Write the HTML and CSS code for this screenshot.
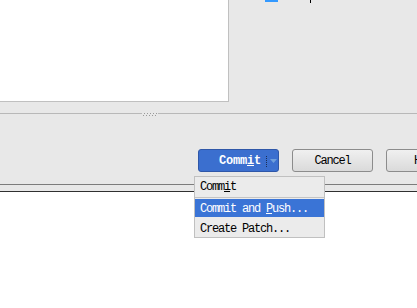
FILE: index.html
```html
<!DOCTYPE html>
<html lang="en">
<head>
    <meta charset="UTF-8">
    <title>Commit Changes</title>
    <link rel="stylesheet" href="styles.css">
</head>
<body>
    <div class="top">
        <div class="panel"></div>
        <div class="side">
            <span class="check"></span>
            <span class="mark"></span>
        </div>
    </div>

    <div class="splitter">
        <svg class="grip" width="16" height="4" viewBox="0 0 16 4">
            <g fill="#9a9a9a">
                <rect x="1" y="2" width="1" height="1"/><rect x="2" y="0" width="1" height="1"/>
                <rect x="4" y="2" width="1" height="1"/><rect x="5" y="0" width="1" height="1"/>
                <rect x="7" y="2" width="1" height="1"/><rect x="8" y="0" width="1" height="1"/>
                <rect x="10" y="2" width="1" height="1"/><rect x="11" y="0" width="1" height="1"/>
                <rect x="13" y="2" width="1" height="1"/><rect x="14" y="0" width="1" height="1"/>
            </g>
        </svg>
    </div>

    <div class="actions">
        <button class="btn btn-primary" type="button">
            <span class="btn-label">Comm<u>i</u>t</span>
            <span class="btn-split"></span>
            <svg class="btn-arrow" width="7" height="4" viewBox="0 0 7 4"><path d="M0 0H7L3.5 4Z" fill="#6f9fdc"/></svg>
        </button>
        <button class="btn" type="button">Cancel</button>
        <button class="btn btn-cut" type="button">Help</button>
    </div>

    <div class="rule"></div>
    <div class="bottom"></div>

    <!-- menu desplegable del botón Commit -->
    <div class="menu">
        <div class="menu-item">Comm<u>i</u>t</div>
        <div class="menu-sep"></div>
        <div class="menu-item active">Commit and <u>P</u>ush...</div>
        <div class="menu-item last">Create Patch...</div>
    </div>
</body>
</html>
```

FILE: styles.css
```css
html, body {
    margin: 0;
    overflow: hidden;
    height: 308px;
}

body {
    background-color: #e8e8e8;
    font-family: "Liberation Mono", "DejaVu Sans Mono", monospace;
    font-size: 12px;
    color: #000000;
    display: flex;
    flex-direction: column;
}

/* Zona superior */
.top {
    display: flex;
    height: 102px;
}

.panel {
    width: 228px;
    height: 101px;
    background-color: #ffffff;
    border-right: 1px solid #c0c0c0;
    border-bottom: 1px solid #c0c0c0;
}

.side {
    display: flex;
    align-items: flex-start;
}

.check {
    width: 13px;
    height: 2px;
    margin-left: 36px;
    background-color: #3399ff;
}

.mark {
    width: 1px;
    height: 3px;
    margin-left: 32px;
    background-color: #000000;
}

/* Separador */
.splitter {
    margin-top: 11px;
    height: 3px;
    border-top: 1px solid #b8b8b8;
    padding-left: 142px;
}

.grip {
    display: block;
    margin-top: -1px;
    background-color: #e8e8e8;
}

/* Botones */
.actions {
    display: flex;
    gap: 13px;
    padding: 32px 0 12px 198px;
}

.btn {
    flex-shrink: 0;
    width: 81px;
    height: 23px;
    padding: 1px 0 0;
    border: 1px solid #8c8c8c;
    border-radius: 3px;
    background: linear-gradient(#f0f0f0, #dadada);
    font-family: "Liberation Mono", "DejaVu Sans Mono", monospace;
    font-size: 12px;
    letter-spacing: -1.2px;
    color: #000000;
}

.btn-cut {
    text-align: left;
    padding-left: 27px;
}

.btn-primary {
    display: flex;
    align-items: center;
    border-color: #2f57a8;
    background: #3b6fcf;
    color: #ffffff;
    font-weight: bold;
    letter-spacing: -0.2px;
}

.btn-label {
    margin-left: 18px;
    width: 46px;
}

.btn-split {
    width: 0;
    height: 11px;
    margin-left: 3px;
    border-left: 1px dotted #1c2f55;
}

.btn-arrow {
    margin-left: 3px;
}

/* Líneas inferiores */
.rule {
    height: 6px;
    border-top: 1px solid #7c7c7c;
    border-bottom: 1px solid #303030;
}

.bottom {
    flex: 1;
    background-color: #ffffff;
}

/* Menú */
.menu {
    position: absolute;
    left: 194px;
    top: 176px;
    width: 129px;
    border: 1px solid #c0c0c0;
    background-color: #ebebeb;
    letter-spacing: -1.2px;
}

.menu-item {
    height: 17px;
    line-height: 17px;
    padding: 2px 0 0 5px;
    white-space: nowrap;
}

.menu-item.active {
    height: 15px;
    line-height: 15px;
    padding-top: 3px;
    background-color: #3a74d6;
    color: #ffffff;
}

.menu-item.last {
    height: 16px;
    line-height: 16px;
    padding-top: 4px;
}

.menu-sep {
    height: 1px;
    margin: 1px 0;
    background-color: #c4c4c4;
}
```
